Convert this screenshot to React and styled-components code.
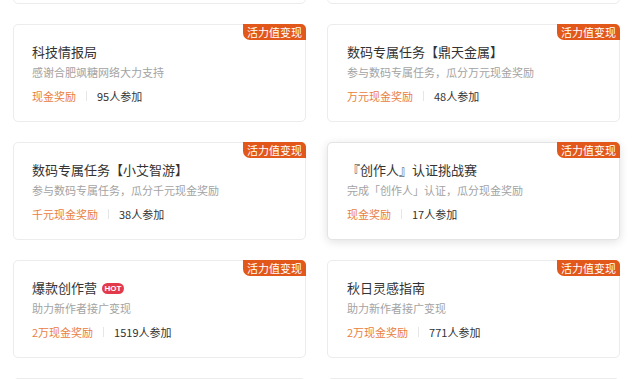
import React from "react";
import styled, { createGlobalStyle } from "styled-components";

const GlobalStyle = createGlobalStyle`
  html, body {
    margin: 0;
    padding: 0;
    background: #fff;
    overflow: hidden;
  }
  body {
    font-family: "Noto Sans CJK SC", "Noto Sans", sans-serif;
  }
`;

const Page = styled.main`
  width: 640px;
  height: 379px;
  overflow: hidden;
  background: #fff;
`;

const Grid = styled.section`
  display: grid;
  grid-template-columns: 293px 293px;
  column-gap: 21px;
  row-gap: 20px;
  padding-left: 13px;
  margin-top: -94px;
`;

const Card = styled.div`
  position: relative;
  box-sizing: border-box;
  height: 98px;
  padding: 17px 18px 0 ${(p) => (p.$right ? 19 : 18)}px;
  background: #fff;
  border: 1px solid ${(p) => (p.$hover ? "#e4e4e4" : "#ececec")};
  border-radius: 5px;
  box-shadow: ${(p) =>
    p.$hover ? "0 2px 10px rgba(0, 0, 0, 0.12)" : "none"};
`;

const Badge = styled.span`
  position: absolute;
  top: -1px;
  right: -1px;
  height: 16px;
  padding: 0 4px;
  background: #e2581a;
  color: #fff;
  font-size: 11px;
  line-height: 16px;
  border-radius: 0 5px 0 7px;
  white-space: nowrap;
`;

const Title = styled.div`
  display: flex;
  align-items: center;
  height: 20px;
  color: #333;
  font-size: 13px;
  line-height: 20px;
  white-space: nowrap;
`;

const Hot = styled.span`
  display: inline-flex;
  align-items: center;
  justify-content: center;
  margin-left: 5px;
  width: 22px;
  height: 11px;
  border-radius: 6px;
  background: #e23a4b;
  color: #fff;
  font-family: "Liberation Sans", Arial, sans-serif;
  font-size: 8px;
  font-weight: 700;
  line-height: 11px;
`;

const Desc = styled.div`
  margin-top: 1px;
  color: #a3a3a3;
  font-size: 11px;
  line-height: 18px;
  white-space: nowrap;
`;

const Meta = styled.div`
  display: flex;
  align-items: center;
  margin-top: 6px;
  height: 18px;
  font-size: 11px;
  line-height: 18px;
  white-space: nowrap;
`;

const Reward = styled.span`
  color: #e9803f;
`;

const Sep = styled.span`
  width: 1px;
  height: 10px;
  margin: 0 10px;
  background: #e6e6e6;
`;

const Count = styled.span`
  color: #333;
`;

// first and last rows are scrolled mostly out of view: only their edges show
const tasks = [
  { ghost: true },
  { ghost: true },
  { title: "科技情报局", desc: "感谢合肥飒糖网络大力支持", reward: "现金奖励", count: "95人参加" },
  { title: "数码专属任务【鼎天金属】", desc: "参与数码专属任务，瓜分万元现金奖励", reward: "万元现金奖励", count: "48人参加" },
  { title: "数码专属任务【小艾智游】", desc: "参与数码专属任务，瓜分千元现金奖励", reward: "千元现金奖励", count: "38人参加" },
  { title: "『创作人』认证挑战赛", desc: "完成「创作人」认证，瓜分现金奖励", reward: "现金奖励", count: "17人参加", hover: true },
  { title: "爆款创作营", hot: true, desc: "助力新作者接广变现", reward: "2万现金奖励", count: "1519人参加" },
  { title: "秋日灵感指南", desc: "助力新作者接广变现", reward: "2万现金奖励", count: "771人参加" },
  { ghost: true },
  { ghost: true },
];

export default function App() {
  return (
    <>
      <GlobalStyle />
      <Page>
        <Grid>
          {tasks.map((t, i) => (
            <Card key={i} $hover={t.hover} $right={i % 2 === 1}>
              {!t.ghost && (
                <>
                  <Badge>活力值变现</Badge>
                  <Title>
                    {t.title}
                    {t.hot && <Hot>HOT</Hot>}
                  </Title>
                  <Desc>{t.desc}</Desc>
                  <Meta>
                    <Reward>{t.reward}</Reward>
                    <Sep />
                    <Count>{t.count}</Count>
                  </Meta>
                </>
              )}
            </Card>
          ))}
        </Grid>
      </Page>
    </>
  );
}
